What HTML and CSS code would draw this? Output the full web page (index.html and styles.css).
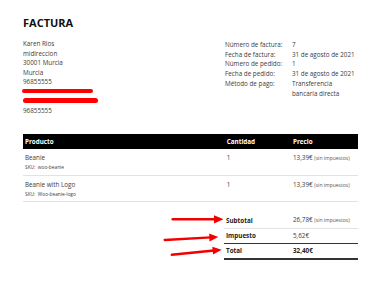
FILE: index.html
```html
<!DOCTYPE html>
<html lang="es">
<head>
<meta charset="utf-8">
<link rel="stylesheet" href="styles.css">
</head>
<body>
<div class="page">
  <h1 class="title">FACTURA</h1>
  <div class="top">
    <div class="address">
      <div>Karen Rios</div>
      <div>midireccion</div>
      <div>30001 Murcia</div>
      <div>Murcia</div>
      <div>96855555</div>
      <div class="redact-line l1"><span class="redact r1"></span></div>
      <div class="redact-line l2"><span class="redact r2"></span></div>
      <div>96855555</div>
    </div>
    <div class="meta">
      <div>Número de factura:</div><div>7</div>
      <div>Fecha de factura:</div><div>31 de agosto de 2021</div>
      <div>Número de pedido:</div><div>1</div>
      <div>Fecha de pedido:</div><div>31 de agosto de 2021</div>
      <div>Método de pago:</div><div>Transferencia bancaria directa</div>
    </div>
  </div>

  <table class="items">
    <colgroup><col class="c1"><col class="c2"><col class="c3"></colgroup>
    <thead>
      <tr><th>Producto</th><th>Cantidad</th><th>Precio</th></tr>
    </thead>
    <tbody>
      <tr>
        <td><div class="name">Beanie</div><div class="sku">SKU:&nbsp; woo-beanie</div></td>
        <td>1</td>
        <td>13,39€ <span class="small">(sin impuestos)</span></td>
      </tr>
      <tr>
        <td><div class="name">Beanie with Logo</div><div class="sku">SKU:&nbsp; Woo-beanie-logo</div></td>
        <td>1</td>
        <td>13,39€ <span class="small">(sin impuestos)</span></td>
      </tr>
    </tbody>
  </table>

  <table class="totals">
    <colgroup><col class="t1"><col class="t2"></colgroup>
    <tr class="sub"><th>Subtotal</th><td>26,78€ <span class="small">(sin impuestos)</span></td></tr>
    <tr class="tax"><th>Impuesto</th><td>5,62€</td></tr>
    <tr class="grand"><th>Total</th><td>32,40€</td></tr>
  </table>
</div>

<svg class="arrows" width="385" height="300" viewBox="0 0 385 300" aria-hidden="true">
  <g stroke="#f20000" stroke-width="2.4" stroke-linecap="round" fill="none">
    <line x1="172.7" y1="219.3" x2="216" y2="219.3"/>
    <line x1="164.7" y1="240" x2="211" y2="237.4"/>
    <line x1="171.7" y1="254.7" x2="214" y2="250.5"/>
  </g>
  <g fill="#f20000">
    <polygon points="214,215.2 223.5,219.3 214,223.4"/>
    <polygon points="209.5,241.4 218.3,237 209.1,233.6"/>
    <polygon points="213.1,254.5 221.7,249.7 212.3,246.7"/>
  </g>
</svg>
</body>
</html>
```

FILE: styles.css
```css
html, body {
  margin: 0;
  padding: 0;
  background: #fff;
}

body {
  position: relative;
  width: 385px;
  height: 300px;
  overflow: hidden;
  font-family: "Open Sans", "DejaVu Sans", sans-serif;
  font-size: 6.3px;
  color: #3c3c3c;
}

.page {
  width: 335px;
  margin-left: 23px;
  padding-top: 15.6px;
}

.title {
  margin: 0;
  font-size: 11px;
  line-height: 14px;
  font-weight: 700;
  color: #111;
}

.top {
  display: flex;
  margin-top: 9.5px;
}

.address {
  width: 202px;
  line-height: 9.5px;
}

.redact-line {
  height: 9.5px;
  box-sizing: border-box;
}

.redact-line.l1 { padding-top: 2.3px; }
.redact-line.l2 { padding-top: 2.2px; }

.redact {
  display: block;
  background: #ff0000;
  border-radius: 2.5px;
}

.r1 {
  width: 71.5px;
  height: 4.6px;
  margin-left: -1.3px;
}

.r2 {
  width: 74.5px;
  height: 5px;
  margin-left: 0.3px;
}

.meta {
  display: grid;
  grid-template-columns: 67px 66px;
  line-height: 9.8px;
  padding-top: 0.8px;
  align-content: start;
}

.items {
  width: 335px;
  margin-top: 19.2px;
  border-collapse: collapse;
  table-layout: fixed;
}

.items .c1 { width: 201.7px; }
.items .c2 { width: 66.3px; }
.items .c3 { width: 67px; }

.items th {
  background: #000;
  color: #fff;
  font-weight: 700;
  text-align: left;
  line-height: 9px;
  padding: 3px 2px;
}

.items td {
  vertical-align: top;
  line-height: 9px;
  padding: 4px 2px 1.6px;
  border-bottom: 1px solid #e2e2e2;
}

.sku {
  font-size: 4.8px;
  line-height: 10.8px;
}

.small {
  font-size: 5px;
  color: #555;
}

.totals {
  width: 134px;
  margin-left: auto;
  margin-top: 10.5px;
  border-collapse: collapse;
  table-layout: fixed;
}

.totals .t1 { width: 67px; }
.totals .t2 { width: 67px; }

.totals th,
.totals td {
  text-align: left;
  line-height: 9px;
  padding: 2.5px 2px;
  white-space: nowrap;
}

.totals th {
  font-weight: 700;
  color: #222;
}

.totals .sub th,
.totals .sub td {
  border-bottom: 1px solid #e2e2e2;
}

.totals .tax th,
.totals .tax td {
  border-bottom: 1.5px solid #333;
}

.totals .grand th,
.totals .grand td {
  font-weight: 700;
  color: #222;
  border-bottom: 2px solid #333;
}

.arrows {
  position: absolute;
  left: 0;
  top: 0;
}
```
